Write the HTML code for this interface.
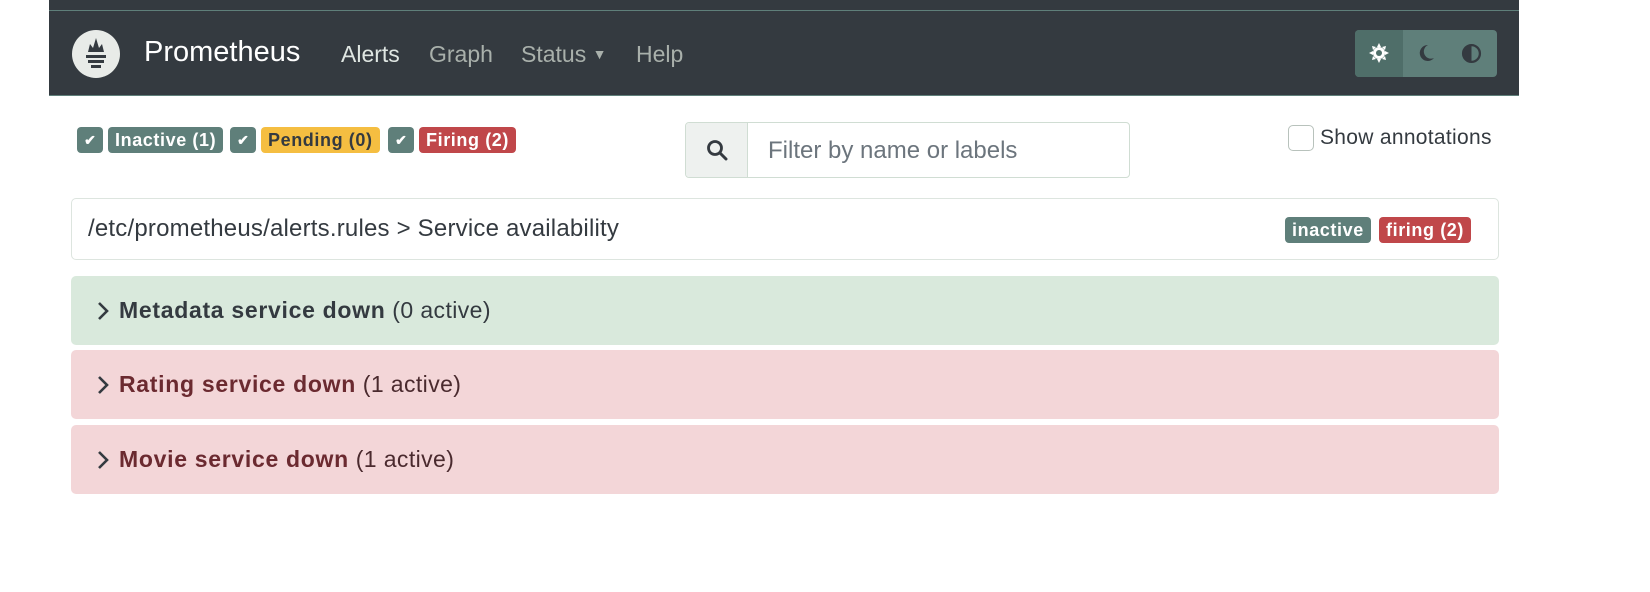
<!DOCTYPE html>
<html><head><meta charset="utf-8"><style>
*{box-sizing:border-box;margin:0;padding:0}
body{width:1650px;height:592px;background:#fff;font-family:"Liberation Sans",sans-serif;position:relative;overflow:hidden;color:#343a40}
.nav{position:absolute;left:49px;top:0;width:1470px;height:96px;background:#343a40;border-bottom:1px solid #5f7f7a}
.nav .line{position:absolute;left:0;right:0;top:10px;height:1px;background:#5f7f7a}
.abs{position:absolute}
.logo{left:23px;top:30px;width:48px;height:48px;border-radius:50%;background:#e8ebe8}
.brand{left:95px;top:36px;font-size:29px;color:#fff}
.nl{top:41px;font-size:23px;color:#a9b0ab}
.theme{left:1306px;top:30px;width:142px;height:47px;background:#5f7f7a;border-radius:4px;overflow:hidden}
.theme .a{position:absolute;left:0;top:0;width:48px;height:47px;background:#4f6e69}
.badge{position:absolute;top:127px;height:26px;border-radius:4px;color:#fff;font-weight:bold;font-size:18px;line-height:26px;padding:0 7px;letter-spacing:0.6px}
.chk{width:26px;padding:0;text-align:center;background:#5f7f7a;font-size:14px;letter-spacing:0}
.search{left:685px;top:122px;width:445px;height:56px;border:1px solid #d0ddd3;border-radius:4px;overflow:hidden}
.search .add{position:absolute;left:0;top:0;width:62px;height:54px;background:#eef1ef;border-right:1px solid #d0ddd3}
.search .ph{position:absolute;left:82px;top:14px;font-size:24px;color:#6c757d}
.card{left:71px;width:1428px;border-radius:5px}
.row{height:69px;font-size:23px;padding-left:48px;line-height:69px;letter-spacing:0.4px}
.row b{letter-spacing:0.7px}
.row svg{position:absolute;left:26px;top:25px}
</style></head><body>
<div class="nav"><div class="line"></div>
<div class="abs logo"><svg width="48" height="48" viewBox="0 0 48 48"><path d="M16 22 L18 14 L21 18 L24 8 L27 18 L30 14 L32 22 Z" fill="#343a40"/><rect x="14" y="25" width="20" height="3" fill="#343a40"/><rect x="16" y="30" width="16" height="3" fill="#343a40"/><rect x="19" y="35" width="10" height="3" fill="#343a40"/></svg></div>
<div class="abs brand">Prometheus</div>
<div class="abs nl" style="left:292px;color:#dfe6e2">Alerts</div>
<div class="abs nl" style="left:380px">Graph</div>
<div class="abs nl" style="left:472px">Status <span style="font-size:14px;vertical-align:3px">▼</span></div>
<div class="abs nl" style="left:587px">Help</div>
<div class="abs theme"><div class="a"></div>
<svg class="abs" style="left:13px;top:12px" width="22" height="22" viewBox="0 0 22 22"><g fill="#fff"><circle cx="11" cy="11" r="6"/><path d="M11 1l2 4h-4zM11 21l2-4h-4zM1 11l4-2v4zM21 11l-4-2v4zM4 4l4 1-3 3zM18 18l-4-1 3-3zM18 4l-1 4-3-3zM4 18l1-4 3 3z"/></g><circle cx="11" cy="11" r="3" fill="#4f6e69"/></svg>
<svg class="abs" style="left:61px;top:13px" width="20" height="20" viewBox="0 0 20 20"><path d="M12 2a8 8 0 1 0 6 13 7 7 0 0 1-6-13z" fill="#343a40"/></svg>
<svg class="abs" style="left:106px;top:13px" width="21" height="21" viewBox="0 0 20 20"><circle cx="10" cy="10" r="8" fill="none" stroke="#343a40" stroke-width="2.2"/><path d="M10 2a8 8 0 0 0 0 16z" fill="#343a40"/></svg>
</div></div>

<div class="badge chk" style="left:77px">✔</div>
<div class="badge" style="left:108px;background:#5f7f7a">Inactive (1)</div>
<div class="badge chk" style="left:230px">✔</div>
<div class="badge" style="left:261px;background:#f5be41;color:#343a40">Pending (0)</div>
<div class="badge chk" style="left:388px">✔</div>
<div class="badge" style="left:419px;background:#c0474a">Firing (2)</div>

<div class="abs search"><div class="add"><svg style="position:absolute;left:20px;top:16px" width="22" height="22" viewBox="0 0 22 22"><circle cx="9" cy="9" r="6.5" fill="none" stroke="#343a40" stroke-width="2.8"/><path d="M14 14l6 6" stroke="#343a40" stroke-width="3" stroke-linecap="round"/></svg></div><div class="ph">Filter by name or labels</div></div>

<div class="abs" style="left:1288px;top:125px;width:26px;height:26px;border:1px solid #b8c2bc;border-radius:5px"></div>
<div class="abs" style="left:1320px;top:126px;font-size:21px;letter-spacing:0.3px">Show annotations</div>

<div class="abs card" style="top:198px;height:62px;border:1px solid #dde5df">
<div class="abs" style="left:16px;top:16px;font-size:24px;letter-spacing:0.2px">/etc/prometheus/alerts.rules &gt; Service availability</div>
<div class="badge" style="left:1213px;top:18px;background:#5f7f7a">inactive</div>
<div class="badge" style="left:1307px;top:18px;background:#c0474a">firing (2)</div>
</div>
<div class="abs card row" style="top:276px;background:#d9e9dc;color:#343a40"><svg width="12" height="20" viewBox="0 0 12 20"><path d="M2 2l8 8-8 8" fill="none" stroke="#343a40" stroke-width="2.6"/></svg><b>Metadata service down</b> (0 active)</div>
<div class="abs card row" style="top:350px;background:#f3d6d8;color:#4a2a2e"><svg width="12" height="20" viewBox="0 0 12 20"><path d="M2 2l8 8-8 8" fill="none" stroke="#343a40" stroke-width="2.6"/></svg><b style="color:#6b2a30">Rating service down</b> (1 active)</div>
<div class="abs card row" style="top:425px;background:#f3d6d8;color:#4a2a2e"><svg width="12" height="20" viewBox="0 0 12 20"><path d="M2 2l8 8-8 8" fill="none" stroke="#343a40" stroke-width="2.6"/></svg><b style="color:#6b2a30">Movie service down</b> (1 active)</div>
</body></html>
